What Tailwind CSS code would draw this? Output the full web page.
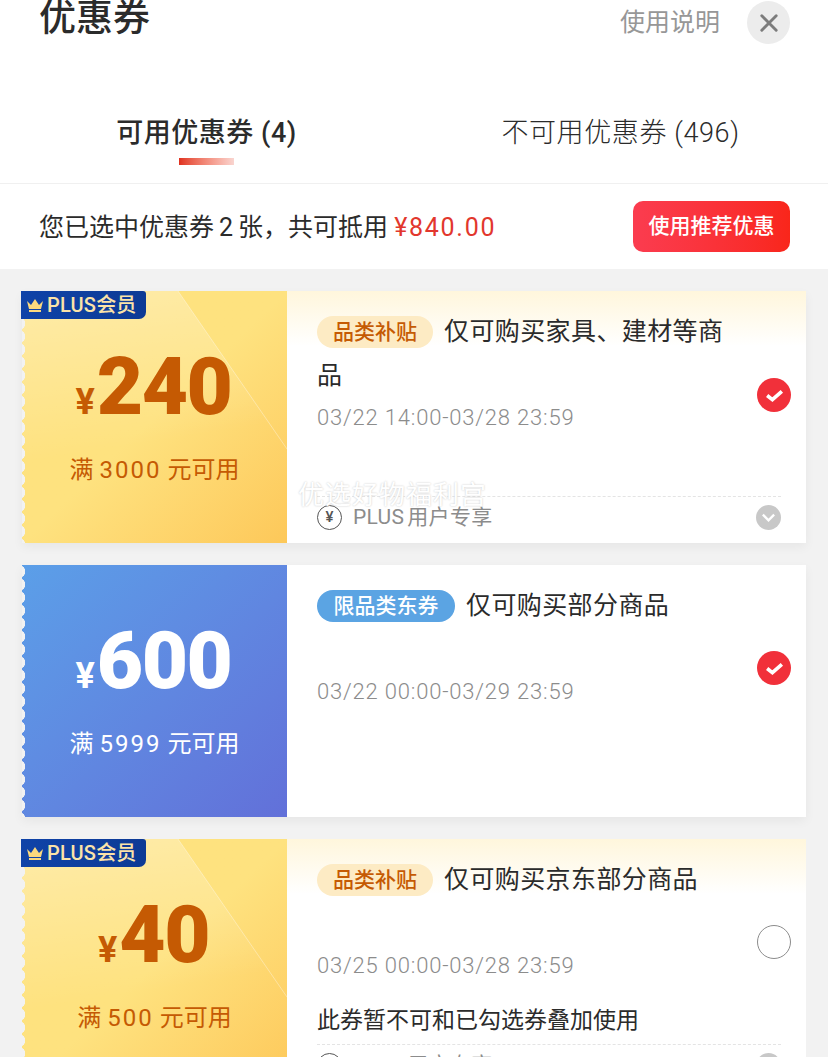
<!DOCTYPE html>
<html lang="zh-CN">
<head>
  <meta charset="UTF-8" />
  <meta name="viewport" content="width=device-width, initial-scale=1.0" />
  <title>优惠券</title>
  <script src="https://cdn.jsdelivr.net/npm/@tailwindcss/browser@4"></script>
</head>
<body class="bg-[#f2f2f2] h-[1057px] overflow-hidden relative font-['Roboto','Noto_Sans_CJK_SC',sans-serif] text-[#2b2b2b]">
  <!-- header -->
  <header class="bg-white h-[184px] border-b border-[#f0f0f0]">
    <div class="flex justify-between items-start pl-[39px] pr-[38px] pt-[1px]">
      <h1 class="text-[37px] leading-[37px] font-medium -mt-[1px]">优惠券</h1>
      <div class="flex items-center gap-[27px]">
        <span class="text-[25px] text-[#979797] mt-[1px]">使用说明</span>
        <button class="w-[43px] h-[43px] rounded-full bg-[#ececec] flex items-center justify-center">
          <svg viewBox="0 0 20 20" class="w-[18px] h-[18px]"><path d="M2 2 L18 18 M18 2 L2 18" stroke="#7c7c7c" stroke-width="3.2" stroke-linecap="round" fill="none"/></svg>
        </button>
      </div>
    </div>
    <div class="flex mt-[71px] text-[27px] leading-[36px]">
      <div class="w-[413px] flex flex-col items-center">
        <span class="font-medium tracking-[0.5px]">可用优惠券 (4)</span>
        <div class="w-[55px] h-[7px] mt-[7px] bg-gradient-to-r from-[#e0301e] to-[#f9d5d0]"></div>
      </div>
      <div class="w-[415px] flex justify-center"><span class="font-light tracking-[0.6px]">不可用优惠券 (496)</span></div>
    </div>
  </header>

  <!-- summary bar -->
  <div class="bg-white h-[85px] flex items-center justify-between pl-[39px] pr-[38px]">
    <p class="text-[25px] mt-[2px]">您已选中优惠券<span class="mx-[5px]">2</span>张，共可抵用 <span class="text-[#e2372d] tracking-[1.7px]">¥840.00</span></p>
    <button class="w-[157px] h-[51px] rounded-[10px] bg-gradient-to-r from-[#fb3c4f] to-[#f9261a] text-white text-[21px] font-medium">使用推荐优惠</button>
  </div>

  <main class="px-[22px] pt-[22px] flex flex-col gap-[22px]">
    <!-- card 1 -->
    <section class="relative flex h-[252px] w-[784px] shadow-[0_4px_10px_rgba(0,0,0,0.05)]">
      <div class="relative w-[265px] shrink-0 overflow-hidden bg-gradient-to-br from-[#fee27f] via-[#fee27f] to-[#fdc859] text-[#c55a03]">
        <svg class="absolute inset-0 w-full h-full" viewBox="0 0 265 252">
          <defs><linearGradient id="shine1" x1="0.4" y1="0" x2="0.5" y2="0.6"><stop offset="0" stop-color="#fff" stop-opacity="0.3"/><stop offset="1" stop-color="#fff" stop-opacity="0"/></linearGradient></defs>
          <polygon points="0,0 156,0 265,158 265,252 0,252" fill="url(#shine1)"/><line x1="156" y1="0" x2="265" y2="158" stroke="#fff" stroke-width="1" opacity="0.35"/>
        </svg>
        <div class="absolute inset-y-0 left-0 w-[4px] bg-[radial-gradient(circle_at_-3px_50%,#f2f2f2_6px,transparent_6.5px)] bg-[length:4px_13px]"></div>
        <div class="relative flex flex-col items-center pt-[50px]">
          <div class="flex items-baseline h-[92px] leading-[92px] pr-[2px]"><span class="text-[36px] font-bold mr-[2px]">¥</span><span class="text-[80px] font-black tracking-[-1.5px]">240</span></div>
          <p class="text-[24px] mt-[20px] leading-[34px]">满<span class="mx-[6px] tracking-[2px]">3000</span>元可用</p>
        </div>
      </div>
      <div class="flex-1 flex flex-col bg-gradient-to-b from-[#fff6dc] to-white to-[55px] bg-white pl-[30px] pr-[25px] pt-[19px] relative">
        <div class="h-[186px] pr-[55px]">
          <p class="text-[25px] leading-[44px] tracking-[0.4px]"><span class="inline-flex items-center justify-center w-[116px] h-[32px] rounded-full bg-[#fdebc4] text-[#c55a03] text-[21px] tracking-normal font-medium align-[1px] mr-[11px]">品类补贴</span>仅可购买家具、建材等商品</p>
          <p class="text-[22px] leading-[30px] mt-[5px] text-[#8c8c8c] font-light tracking-[0.8px]">03/22 14:00-03/28 23:59</p>
        </div>
        <div class="border-t border-dashed border-[#e4e4e4] h-[46px] flex items-start justify-between pt-[8px]">
          <div class="flex items-center gap-[11px] text-[21px] text-[#8c8c8c] leading-[25px]">
            <span class="w-[25px] h-[25px] rounded-full border border-[#555] text-[#555] text-[15px] font-medium flex items-center justify-center">¥</span><span class="tracking-[0.3px]">PLUS<span class="ml-[3px]">用户专享</span></span>
          </div>
          <span class="w-[25px] h-[25px] rounded-full bg-[#c8c8c8] flex items-center justify-center"><svg viewBox="0 0 16 16" class="w-[15px] h-[15px]"><path d="M2 5 L8 11 L14 5" stroke="#fff" stroke-width="2.5" fill="none"/></svg></span>
        </div>
      </div>
      <div class="absolute -left-[1px] top-0 w-[125px] h-[28px] bg-gradient-to-r from-[#0f43a8] to-[#0d3a95] rounded-br-[7px] rounded-tr-[3px] flex items-center pl-[5px] gap-[3px] text-[#fbe3a8] text-[20px] font-medium">
        <svg viewBox="0 0 18 13" class="w-[18px] h-[13px]"><path d="M1 2 L5 6 L9 0 L13 6 L17 2 L15 10 H3 Z M3 11 H15 V13 H3 Z" fill="#fbd97e"/></svg><span class="tracking-[0.2px]">PLUS会员</span>
      </div>
      <span class="absolute left-[735px] top-[87px] w-[34px] h-[34px] rounded-full bg-[#f1303a] flex items-center justify-center"><svg viewBox="0 0 20 20" class="w-[21px] h-[21px]"><path d="M3 10 L8 14 L17 6" stroke="#fff" stroke-width="3.4" fill="none"/></svg></span>
    </section>

    <!-- card 2 -->
    <section class="relative flex h-[252px] w-[784px] shadow-[0_4px_10px_rgba(0,0,0,0.05)]">
      <div class="relative w-[265px] shrink-0 overflow-hidden bg-gradient-to-br from-[#5b9fe8] to-[#6270d9] text-white">
        <div class="absolute inset-y-0 left-0 w-[4px] bg-[radial-gradient(circle_at_-3px_50%,#f2f2f2_6px,transparent_6.5px)] bg-[length:4px_13px]"></div>
        <div class="relative flex flex-col items-center pt-[50px]">
          <div class="flex items-baseline h-[92px] leading-[92px] pr-[2px]"><span class="text-[36px] font-bold mr-[2px]">¥</span><span class="text-[80px] font-black tracking-[-1.5px]">600</span></div>
          <p class="text-[24px] mt-[20px] leading-[34px]">满<span class="mx-[6px] tracking-[2px]">5999</span>元可用</p>
        </div>
      </div>
      <div class="flex-1 bg-white pl-[30px] pr-[80px] pt-[19px]">
        <p class="text-[25px] leading-[44px] tracking-[0.4px]"><span class="inline-flex items-center justify-center w-[138px] h-[32px] rounded-full bg-[#5ba4e3] text-white text-[21px] tracking-normal font-medium align-[1px] mr-[11px]">限品类东券</span>仅可购买部分商品</p>
        <p class="text-[22px] leading-[30px] mt-[49px] text-[#8c8c8c] font-light tracking-[0.8px]">03/22 00:00-03/29 23:59</p>
      </div>
      <span class="absolute left-[735px] top-[86px] w-[34px] h-[34px] rounded-full bg-[#f1303a] flex items-center justify-center"><svg viewBox="0 0 20 20" class="w-[21px] h-[21px]"><path d="M3 10 L8 14 L17 6" stroke="#fff" stroke-width="3.4" fill="none"/></svg></span>
    </section>

    <!-- card 3 -->
    <section class="relative flex h-[252px] w-[784px]">
      <div class="relative w-[265px] shrink-0 overflow-hidden bg-gradient-to-br from-[#fee27f] via-[#fee27f] to-[#fdc859] text-[#c55a03]">
        <svg class="absolute inset-0 w-full h-full" viewBox="0 0 265 252">
          <defs><linearGradient id="shine3" x1="0.4" y1="0" x2="0.5" y2="0.6"><stop offset="0" stop-color="#fff" stop-opacity="0.3"/><stop offset="1" stop-color="#fff" stop-opacity="0"/></linearGradient></defs>
          <polygon points="0,0 156,0 265,158 265,252 0,252" fill="url(#shine3)"/><line x1="156" y1="0" x2="265" y2="158" stroke="#fff" stroke-width="1" opacity="0.35"/>
        </svg>
        <div class="absolute inset-y-0 left-0 w-[4px] bg-[radial-gradient(circle_at_-3px_50%,#f2f2f2_6px,transparent_6.5px)] bg-[length:4px_13px]"></div>
        <div class="relative flex flex-col items-center pt-[50px]">
          <div class="flex items-baseline h-[92px] leading-[92px] pr-[2px]"><span class="text-[36px] font-bold mr-[2px]">¥</span><span class="text-[80px] font-black tracking-[-1.5px]">40</span></div>
          <p class="text-[24px] mt-[20px] leading-[34px]">满<span class="mx-[6px] tracking-[2px]">500</span>元可用</p>
        </div>
      </div>
      <div class="flex-1 flex flex-col bg-gradient-to-b from-[#fff6dc] to-white to-[55px] bg-white pl-[30px] pr-[25px] pt-[19px]">
        <div class="h-[186px] pr-[55px]">
          <p class="text-[25px] leading-[44px] tracking-[0.4px]"><span class="inline-flex items-center justify-center w-[116px] h-[32px] rounded-full bg-[#fdebc4] text-[#c55a03] text-[21px] tracking-normal font-medium align-[1px] mr-[11px]">品类补贴</span>仅可购买京东部分商品</p>
          <p class="text-[22px] leading-[30px] mt-[49px] text-[#8c8c8c] font-light tracking-[0.8px]">03/25 00:00-03/28 23:59</p>
          <p class="text-[23px] leading-[36px] mt-[22px]">此券暂不可和已勾选券叠加使用</p>
        </div>
        <div class="border-t border-dashed border-[#e4e4e4] h-[46px] flex items-start justify-between pt-[8px]">
          <div class="flex items-center gap-[11px] text-[21px] text-[#8c8c8c] leading-[25px]">
            <span class="w-[25px] h-[25px] rounded-full border border-[#555] text-[#555] text-[15px] font-medium flex items-center justify-center">¥</span><span class="tracking-[0.3px]">PLUS<span class="ml-[3px]">用户专享</span></span>
          </div>
          <span class="w-[25px] h-[25px] rounded-full bg-[#c8c8c8]"></span>
        </div>
      </div>
      <div class="absolute -left-[1px] top-0 w-[125px] h-[28px] bg-gradient-to-r from-[#0f43a8] to-[#0d3a95] rounded-br-[7px] rounded-tr-[3px] flex items-center pl-[5px] gap-[3px] text-[#fbe3a8] text-[20px] font-medium">
        <svg viewBox="0 0 18 13" class="w-[18px] h-[13px]"><path d="M1 2 L5 6 L9 0 L13 6 L17 2 L15 10 H3 Z M3 11 H15 V13 H3 Z" fill="#fbd97e"/></svg><span class="tracking-[0.2px]">PLUS会员</span>
      </div>
      <span class="absolute left-[735px] top-[86px] w-[34px] h-[34px] rounded-full bg-white border border-[#8c8c8c]"></span>
    </section>
  </main>

  <!-- watermark -->
  <div class="absolute left-[298px] top-[477px] text-[26px] leading-[36px] tracking-[1px] text-white [text-shadow:0_0_2px_#c4c4c4]">优选好物福利宫</div>
</body>
</html>
